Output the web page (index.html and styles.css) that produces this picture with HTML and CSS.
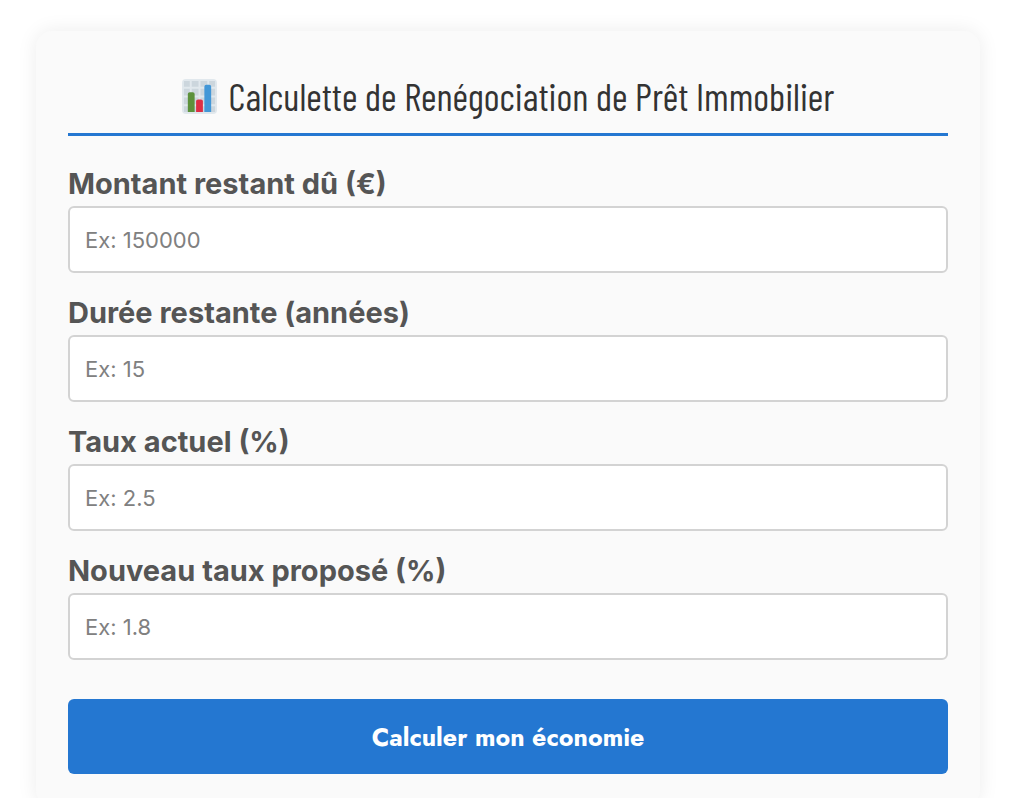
FILE: index.html
```html
<!DOCTYPE html>
<html lang="fr">
<head>
	<meta charset="UTF-8">
	<meta name="viewport" content="width=device-width, initial-scale=1">
	<title>Calculette de Renégociation de Prêt Immobilier</title>
	<link rel="stylesheet" href="styles.css">
</head>
<body>
	<form class="calculette">
		<h2 class="titre">
			<svg class="icone" viewBox="0 0 36 36" aria-hidden="true">
				<rect width="36" height="36" rx="4" fill="#e1e8ed"/>
				<path fill="#ccd6dd" d="M2 2h6v6H2zM10 2h7v6h-7zM19 2h7v6h-7zM28 2h6v6h-6zM2 10h6v7H2zM10 10h7v7h-7zM19 10h7v7h-7zM28 10h6v7h-6zM2 19h6v7H2zM10 19h7v7h-7zM19 19h7v7h-7zM28 19h6v7h-6zM2 28h6v6H2zM10 28h7v6h-7zM19 28h7v6h-7zM28 28h6v6h-6z"/>
				<path fill="#5c913b" d="M6 34V15.500q0-2 2-2h3q2 0 2 2V34z"/>
				<path fill="#dd2e44" d="M14.500 34V23q0-2 2-2h3q2 0 2 2v11z"/>
				<path fill="#4297d7" d="M23 34V8q0-2 2-2h3q2 0 2 2v26z"/>
			</svg>
			<span>Calculette de Renégociation de Prêt Immobilier</span>
		</h2>

		<div class="champ">
			<label for="montant">Montant restant dû (€)</label>
			<input type="number" id="montant" placeholder="Ex: 150000">
		</div>
		<div class="champ">
			<label for="duree">Durée restante (années)</label>
			<input type="number" id="duree" placeholder="Ex: 15">
		</div>
		<div class="champ">
			<label for="taux-actuel">Taux actuel (%)</label>
			<input type="number" id="taux-actuel" step="0.01" placeholder="Ex: 2.5">
		</div>
		<div class="champ">
			<label for="nouveau-taux">Nouveau taux proposé (%)</label>
			<input type="number" id="nouveau-taux" step="0.01" placeholder="Ex: 1.8">
		</div>

		<button type="button" class="bouton">Calculer mon économie</button>
	</form>
</body>
</html>
```
FILE: styles.css
```css
*{
	box-sizing: border-box;
}

body{
	margin: 0;
	padding: 31px 44px 0 36px;
	background-color: #fff;
	font-family: Inter, "Liberation Sans", sans-serif;
}

.calculette{
	padding: 32px;
	background-color: #fafafa;
	border-radius: 16px;
	box-shadow: 0 0 20px rgba(0, 0, 0, 0.08);
}

.titre{
	display: flex;
	justify-content: center;
	align-items: center;
	gap: 12px;
	margin: 0 0 30px;
	padding: 10px 0 14px;
	border-bottom: 3px solid #2477d1;
	color: #333;
	font-family: "Barlow Condensed", "Roboto Condensed", "Liberation Sans Narrow", sans-serif;
	font-size: 38px;
	font-weight: 400;
	line-height: 46px;
}

.icone{
	width: 35px;
	height: 35px;
}

.champ{
	display: flex;
	flex-direction: column;
	gap: 4px;
	margin-bottom: 22px;
}

.champ label{
	color: #555;
	font-size: 29px;
	font-weight: 700;
	line-height: 36px;
}

.champ input{
	width: 100%;
	height: 67px;
	padding: 0 15px;
	border: 2px solid #d3d3d3;
	border-radius: 6px;
	background-color: #fff;
	color: #333;
	font-family: inherit;
	font-size: 22px;
}

.champ input::placeholder{
	color: #808080;
}

.bouton{
	display: block;
	width: 100%;
	height: 75px;
	margin-top: 39px;
	border: 0;
	border-radius: 6px;
	background-color: #2477d1;
	color: #fff;
	font-family: Jost, Lato, sans-serif;
	font-size: 25px;
	font-weight: 700;
	cursor: pointer;
}
```
